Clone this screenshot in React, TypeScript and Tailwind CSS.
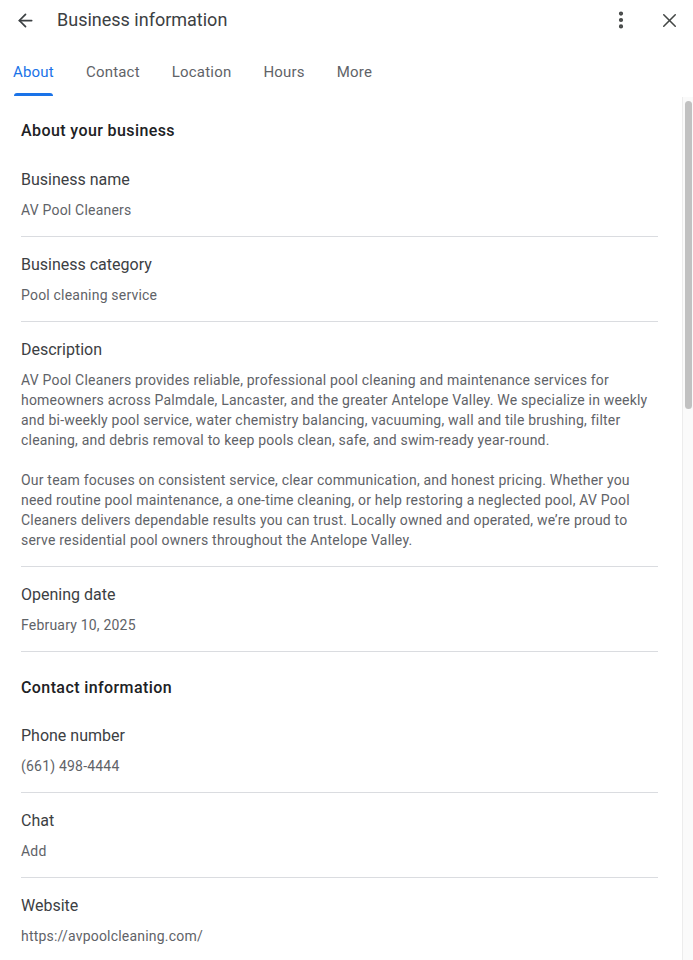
import { ArrowLeft, MoreVertical, X } from "lucide-react";

const font = { fontFamily: "Roboto, 'Liberation Sans', sans-serif" };

type Item = { label: string; value: string | string[] };

const about: Item[] = [
  { label: "Business name", value: "AV Pool Cleaners" },
  { label: "Business category", value: "Pool cleaning service" },
  {
    label: "Description",
    value: [
      "AV Pool Cleaners provides reliable, professional pool cleaning and maintenance services for homeowners across Palmdale, Lancaster, and the greater Antelope Valley. We specialize in weekly and bi-weekly pool service, water chemistry balancing, vacuuming, wall and tile brushing, filter cleaning, and debris removal to keep pools clean, safe, and swim-ready year-round.",
      "Our team focuses on consistent service, clear communication, and honest pricing. Whether you need routine pool maintenance, a one-time cleaning, or help restoring a neglected pool, AV Pool Cleaners delivers dependable results you can trust. Locally owned and operated, we’re proud to serve residential pool owners throughout the Antelope Valley.",
    ],
  },
  { label: "Opening date", value: "February 10, 2025" },
];

const contact: Item[] = [
  { label: "Phone number", value: "(661) 498-4444" },
  { label: "Chat", value: "Add" },
  { label: "Website", value: "https://avpoolcleaning.com/" },
];

const tabs = ["About", "Contact", "Location", "Hours", "More"];

function Row({ item, last }: { item: Item; last?: boolean }) {
  return (
    <div className={`pt-4 pb-4 ${last ? "" : "border-b border-[#dadce0]"}`}>
      <div className="text-[16px] leading-6 text-[#3c4043]">{item.label}</div>
      {Array.isArray(item.value) ? (
        <div className="mt-2 text-[14px] leading-5 tracking-[0.2px] text-[#5f6368]">
          <p>{item.value[0]}</p>
          <p className="mt-5">{item.value[1]}</p>
        </div>
      ) : (
        <div className="mt-2 text-[14px] leading-5 tracking-[0.2px] text-[#5f6368]">{item.value}</div>
      )}
    </div>
  );
}

function Section({ title, items, first }: { title: string; items: Item[]; first?: boolean }) {
  return (
    <div className={first ? "border-b border-[#dadce0] pt-[22px]" : "pt-6"}>
      <h2
        className={`${first ? "mb-[9px]" : "mb-2"} text-[16px] font-medium leading-6 tracking-[0.4px] text-[#202124]`}
      >
        {title}
      </h2>
      {items.map((it, i) => (
        <Row key={it.label} item={it} last={i === items.length - 1} />
      ))}
    </div>
  );
}

export default function App() {
  return (
    <div className="flex h-[960px] w-[693px] flex-col overflow-hidden bg-white" style={font}>
      {/* header */}
      <div className="flex h-10 shrink-0 items-center pl-[13px] pr-[12px]">
        <button type="button" aria-label="Back" className="flex h-6 w-6 items-center justify-center text-[#3c4043]">
          <ArrowLeft size={21} strokeWidth={2} />
        </button>
        <h1 className="ml-5 flex-1 text-[18px] leading-6 text-[#3c4043]">Business information</h1>
        <button type="button" aria-label="More" className="mr-6 flex h-6 w-6 items-center justify-center text-[#444746]">
          <MoreVertical size={22} strokeWidth={2.6} />
        </button>
        <button type="button" aria-label="Close" className="flex h-6 w-6 items-center justify-center text-[#444746]">
          <X size={23} strokeWidth={1.6} />
        </button>
      </div>

      {/* tabs */}
      <div className="flex h-[57px] shrink-0 gap-8 pl-[13px] pt-[22px]">
        {tabs.map((t, i) => (
          <div key={t} className="flex flex-col">
            <span
              className={`text-[15px] leading-5 tracking-[0.2px] ${i === 0 ? "text-[#1a73e8]" : "text-[#5f6368]"}`}
            >
              {t}
            </span>
            {i === 0 && <span className="mx-[1px] mt-[11px] h-[3px] rounded-t-[3px] bg-[#1a73e8]" />}
          </div>
        ))}
      </div>

      {/* body */}
      <div className="flex min-h-0 flex-1">
        <div className="flex-1 pl-[21px] pr-[24px]">
          <Section title="About your business" items={about} first />
          <Section title="Contact information" items={contact} />
        </div>
        <div className="w-[11px] shrink-0 border-l border-[#ececec] bg-[#fafafa] pt-[4px]">
          <div className="ml-[2px] h-[308px] w-[7px] rounded-full bg-[#c1c1c1]" />
        </div>
      </div>
    </div>
  );
}
